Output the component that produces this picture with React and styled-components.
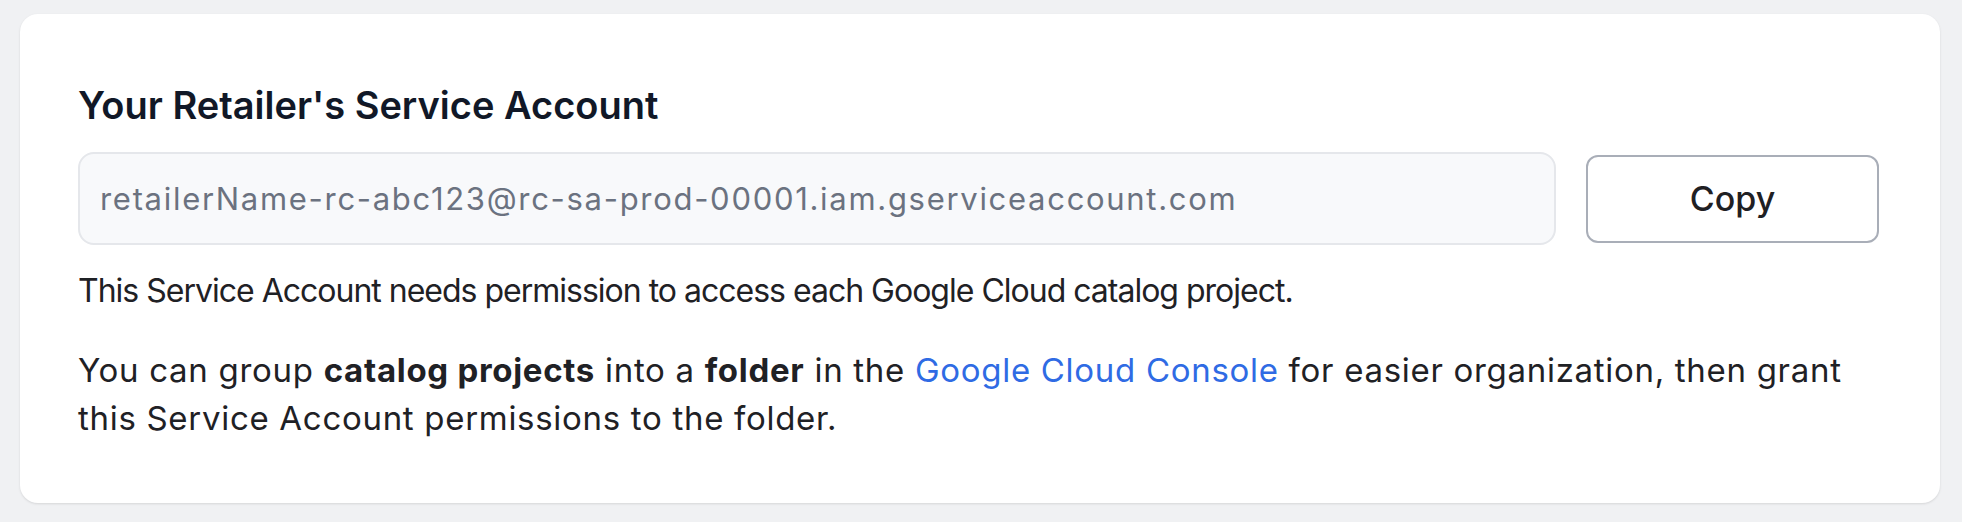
import styled, { createGlobalStyle } from 'styled-components';

const GlobalStyle = createGlobalStyle`
  html, body {
    margin: 0;
    padding: 0;
    background: #f0f1f3;
  }
  body {
    font-family: Inter, 'Noto Sans', sans-serif;
    -webkit-font-smoothing: antialiased;
  }
`;

const Page = styled.div`
  padding: 14px 22px 19px 20px;
`;

const Card = styled.section`
  background: #ffffff;
  border-radius: 18px;
  box-shadow: 0 1px 3px rgba(0, 0, 0, 0.08), 0 1px 2px rgba(0, 0, 0, 0.04);
  padding: 67px 61px 61px 58px;
`;

const Title = styled.h2`
  margin: 0 0 23px;
  font-size: 38px;
  line-height: 48px;
  font-weight: 600;
  color: #111827;
`;

const Row = styled.div`
  display: flex;
  align-items: center;
  gap: 30px;
`;

const AccountField = styled.input`
  flex: 1;
  height: 93px;
  box-sizing: border-box;
  padding: 0 20px;
  border: 2px solid #e5e7eb;
  border-radius: 16px;
  background: #f8f9fb;
  font-family: inherit;
  font-size: 31px;
  letter-spacing: 1.7px;
  color: #6b7280;
  outline: none;
`;

const CopyButton = styled.button`
  width: 293px;
  height: 88px;
  box-sizing: border-box;
  border: 2px solid #a9aeb8;
  border-radius: 12px;
  background: #ffffff;
  font-family: inherit;
  font-size: 34px;
  font-weight: 500;
  color: #1f2023;
  cursor: pointer;
`;

const Text = styled.p`
  margin: ${p => (p.$first ? '22px 0 0' : '31px 0 0')};
  font-size: ${p => (p.$first ? '32px' : '33px')};
  line-height: 48px;
  letter-spacing: ${p => (p.$first ? '-1px' : '0.7px')};
  color: #1f2125;

  strong {
    font-weight: 700;
  }
`;

const Link = styled.a`
  color: #2f6be4;
  text-decoration: none;
`;

export default function App() {
  return (
    <>
      <GlobalStyle />
      <Page>
        <Card>
          <Title>Your Retailer's Service Account</Title>
          <Row>
            <AccountField
              readOnly
              value='retailerName-rc-abc123@rc-sa-prod-00001.iam.gserviceaccount.com'
            />
            <CopyButton type='button'>Copy</CopyButton>
          </Row>
          <Text $first>
            This Service Account needs permission to access each Google Cloud catalog project.
          </Text>
          <Text>
            You can group <strong>catalog projects</strong> into a <strong>folder</strong> in the{' '}
            <Link href='#'>Google Cloud Console</Link> for easier organization, then grant this
            Service Account permissions to the folder.
          </Text>
        </Card>
      </Page>
    </>
  );
}
